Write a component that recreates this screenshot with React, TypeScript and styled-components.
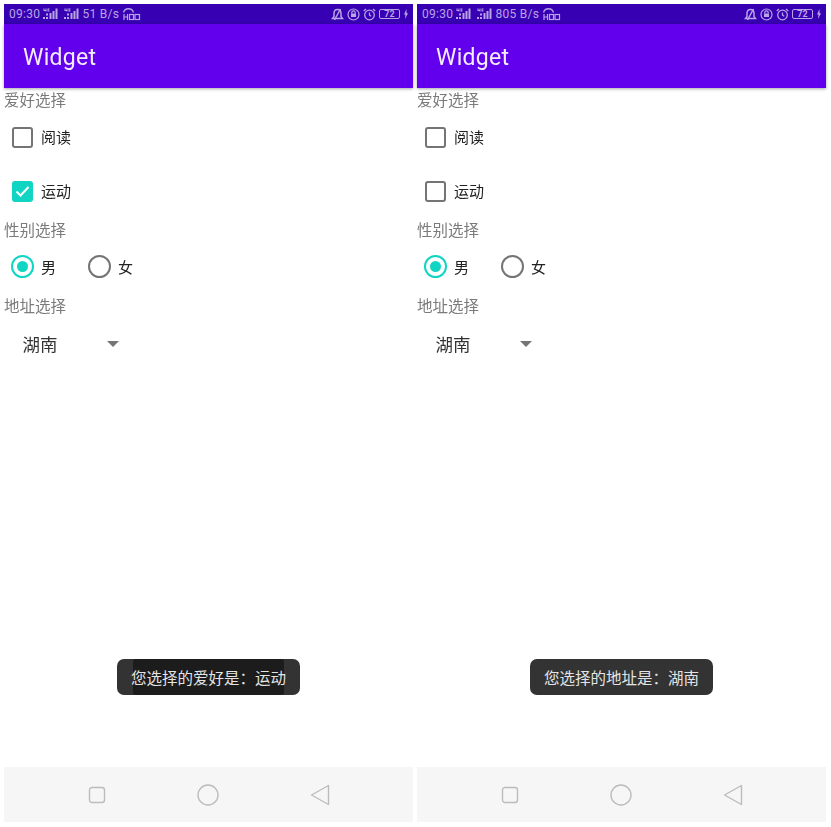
import React from "react";
import styled, { createGlobalStyle } from "styled-components";

const GlobalStyle = createGlobalStyle`
  html, body {
    margin: 0;
    padding: 0;
    background: #fff;
  }
  body {
    font-family: "Roboto", "Noto Sans CJK SC", sans-serif;
  }
`;

const Page = styled.div`
  width: 831px;
  height: 827px;
  box-sizing: border-box;
  padding: 4px 5px 5px 4px;
  display: flex;
  gap: 4px;
  overflow: hidden;
  filter: blur(0.5px);
`;

const Phone = styled.div`
  position: relative;
  width: 409px;
  height: 818px;
  display: flex;
  flex-direction: column;
`;

const StatusBar = styled.div`
  height: 20px;
  flex: none;
  background: #3700b3;
  color: #b9a5e6;
  display: flex;
  align-items: center;
  justify-content: space-between;
  padding: 0 4px 0 5px;
  font-size: 12px;
  letter-spacing: 0.3px;
`;

const StatusGroup = styled.div`
  display: flex;
  align-items: center;
  gap: 3px;
`;

const SignalGroup = styled.div`
  display: flex;
  align-items: center;
  gap: 6px;
`;

const AppBar = styled.div`
  height: 64px;
  flex: none;
  background: #6200ee;
  color: #f3ecfe;
  display: flex;
  align-items: center;
  padding: 2px 19px 0;
  box-sizing: border-box;
  font-size: 23px;
  font-weight: 400;
  letter-spacing: 0.3px;
  box-shadow: 0 1px 3px rgba(0, 0, 0, 0.35);
`;

const Content = styled.div`
  flex: 1;
  display: flex;
  flex-direction: column;
`;

const SectionLabel = styled.div`
  height: 22px;
  line-height: 22px;
  font-size: 15.5px;
  color: #7b7b7b;
  font-family: "Noto Sans CJK SC", sans-serif;
`;

const CheckRow = styled.div`
  height: 54px;
  display: flex;
  align-items: center;
  padding-left: 8px;
  gap: 8px;
  font-size: 15px;
  color: #222;
  font-family: "Noto Sans CJK SC", sans-serif;
`;

const CheckBox = styled.span<{ $checked?: boolean }>`
  width: 21px;
  height: 21px;
  box-sizing: border-box;
  border-radius: 3px;
  border: 2px solid ${(p) => (p.$checked ? "#10d5c3" : "#747474")};
  background: ${(p) => (p.$checked ? "#10d5c3" : "transparent")};
  display: flex;
  align-items: center;
  justify-content: center;
`;

const CheckText = styled.span`
  position: relative;
  top: -1px;
`;

const RadioGroup = styled.div`
  height: 52px;
  margin-bottom: 2px;
  display: flex;
  align-items: center;
  padding-left: 7px;
`;

const RadioItem = styled.div`
  display: flex;
  align-items: center;
  gap: 7px;
  width: 77px;
  font-size: 15px;
  color: #222;
  font-family: "Noto Sans CJK SC", sans-serif;
`;

const RadioCircle = styled.span<{ $checked?: boolean }>`
  width: 23px;
  height: 23px;
  box-sizing: border-box;
  border-radius: 50%;
  border: 2px solid ${(p) => (p.$checked ? "#10d5c3" : "#747474")};
  display: flex;
  align-items: center;
  justify-content: center;
  &::after {
    content: "";
    width: 11px;
    height: 11px;
    border-radius: 50%;
    background: ${(p) => (p.$checked ? "#10d5c3" : "transparent")};
  }
`;

const Spinner = styled.div`
  height: 50px;
  margin-top: 2px;
  display: flex;
  align-items: center;
  padding-left: 18.5px;
  font-size: 17.5px;
  color: #333;
  font-family: "Noto Sans CJK SC", sans-serif;
`;

const SpinnerValue = styled.span`
  width: 84.5px;
`;

const Arrow = styled.span`
  width: 0;
  height: 0;
  margin-top: 1px;
  border-left: 6px solid transparent;
  border-right: 6px solid transparent;
  border-top: 6px solid #757575;
`;

const Toast = styled.div`
  position: absolute;
  left: 113px;
  top: 655px;
  width: 183px;
  height: 36px;
  box-sizing: border-box;
  border-radius: 7px;
  background: #333;
  color: #e4e4e4;
  font-size: 15.5px;
  font-family: "Noto Sans CJK SC", sans-serif;
  display: flex;
  align-items: center;
  justify-content: center;
`;

// the older toast still fading out underneath shows as a darker band
const ToastBand = styled.span<{ $dark?: boolean }>`
  height: 100%;
  display: flex;
  align-items: center;
  justify-content: center;
  width: 151px;
  white-space: nowrap;
  border-radius: 3px;
  background: ${(p) => (p.$dark ? "#1c1c1c" : "transparent")};
`;

const NavBar = styled.div`
  height: 55px;
  flex: none;
  background: #f6f6f6;
  display: flex;
  align-items: center;
  justify-content: space-between;
  padding: 0 83px 0 84px;
`;

const Battery = styled.span`
  width: 21px;
  height: 10px;
  box-sizing: border-box;
  border: 1px solid #b9a5e6;
  border-radius: 2px;
  font-size: 9px;
  font-weight: 700;
  letter-spacing: 0;
  line-height: 8px;
  text-align: center;
`;

const SignalIcon = () => (
  <svg width="15" height="12" viewBox="0 0 15 12" fill="#b9a5e6">
    <rect x="0" y="9" width="2" height="2" />
    <rect x="3" y="9" width="2" height="2" />
    <rect x="3" y="5.5" width="2" height="2" />
    <rect x="6.5" y="5" width="2" height="6" />
    <rect x="9.5" y="3" width="2" height="8" />
    <rect x="12.5" y="0.5" width="2" height="10.5" />
    <path d="M0.5 0.5h1v1.5h1V0.5h1v3h-1V3h-2zM4.5 0.5h2v1h-1v1h1v1h-2z" />
  </svg>
);

const HdIcon = () => (
  <svg width="19" height="14" viewBox="0 0 19 14" fill="none" stroke="#b9a5e6">
    <path d="M1.5 5.5C3 0.5 10 0.5 11.5 5.5" strokeWidth="1.4" />
    <path d="M2 7v6M5.5 7v6M2 10h3.5" strokeWidth="1.2" />
    <rect x="7.5" y="7.5" width="4" height="5" strokeWidth="1.2" />
    <rect x="13" y="7.5" width="4.5" height="5" strokeWidth="1.2" />
  </svg>
);

const BellOffIcon = () => (
  <svg width="13" height="13" viewBox="0 0 13 13" fill="none" stroke="#b9a5e6" strokeWidth="1.5">
    <path d="M1.5 10.5h10L10 8.5V5.5C10 3 8.5 1.5 6.5 1.5S3 3 3 5.5v3z" />
    <path d="M3.5 12L9.5 1" />
  </svg>
);

const LockRingIcon = () => (
  <svg width="13" height="13" viewBox="0 0 13 13" fill="none" stroke="#b9a5e6" strokeWidth="1.2">
    <circle cx="6.5" cy="6.5" r="5.5" />
    <rect x="4" y="5.5" width="5" height="3.5" fill="#b9a5e6" stroke="none" />
    <path d="M4.8 5.5V4.6a1.7 1.7 0 0 1 3.4 0v.9" />
  </svg>
);

const AlarmIcon = () => (
  <svg width="13" height="13" viewBox="0 0 13 13" fill="none" stroke="#b9a5e6" strokeWidth="1.3">
    <circle cx="6.5" cy="7" r="4.8" />
    <path d="M6.5 4.5V7.2L8.3 8.2M0.8 3L3 1M12.2 3L10 1" />
  </svg>
);

const ChargeIcon = () => (
  <svg width="6" height="10" viewBox="0 0 6 10" fill="#b9a5e6">
    <path d="M3.5 0L1 5.5h1.5L2 10l3-5.8H3.5z" />
  </svg>
);

const CheckIcon = () => (
  <svg width="15" height="13" viewBox="0 0 15 13" fill="none" stroke="#fff" strokeWidth="2">
    <path d="M1.5 6.5L5.5 10.5L13.5 2" />
  </svg>
);

const NavSquare = () => (
  <svg width="18" height="18" viewBox="0 0 18 18" fill="none" stroke="#bcbcbc" strokeWidth="1.4">
    <rect x="1.5" y="1.5" width="15" height="15" rx="2.5" />
  </svg>
);

const NavCircle = () => (
  <svg width="22" height="22" viewBox="0 0 22 22" fill="none" stroke="#bcbcbc" strokeWidth="1.4">
    <circle cx="11" cy="11" r="10" />
  </svg>
);

const NavBack = () => (
  <svg width="20" height="22" viewBox="0 0 20 22" fill="none" stroke="#bcbcbc" strokeWidth="1.4" strokeLinejoin="round">
    <path d="M18.5 1.5V20.5L1.5 11z" />
  </svg>
);

type ScreenProps = {
  speed: string;
  sportChecked: boolean;
  toast: string;
  toastOverlap?: boolean;
};

function Screen({ speed, sportChecked, toast, toastOverlap }: ScreenProps) {
  return (
    <Phone>
      <StatusBar>
        <StatusGroup>
          <span>09:30</span>
          <SignalGroup>
            <SignalIcon />
            <SignalIcon />
          </SignalGroup>
          <span>{speed}</span>
          <HdIcon />
        </StatusGroup>
        <StatusGroup>
          <BellOffIcon />
          <LockRingIcon />
          <AlarmIcon />
          <Battery>72</Battery>
          <ChargeIcon />
        </StatusGroup>
      </StatusBar>
      <AppBar>Widget</AppBar>
      <Content>
        <SectionLabel>爱好选择</SectionLabel>
        <CheckRow>
          <CheckBox />
          <CheckText>阅读</CheckText>
        </CheckRow>
        <CheckRow>
          <CheckBox $checked={sportChecked}>{sportChecked && <CheckIcon />}</CheckBox>
          <CheckText>运动</CheckText>
        </CheckRow>
        <SectionLabel>性别选择</SectionLabel>
        <RadioGroup>
          <RadioItem>
            <RadioCircle $checked />男
          </RadioItem>
          <RadioItem>
            <RadioCircle />女
          </RadioItem>
        </RadioGroup>
        <SectionLabel>地址选择</SectionLabel>
        <Spinner>
          <SpinnerValue>湖南</SpinnerValue>
          <Arrow />
        </Spinner>
      </Content>
      <Toast>
        <ToastBand $dark={toastOverlap}>{toast}</ToastBand>
      </Toast>
      <NavBar>
        <NavSquare />
        <NavCircle />
        <NavBack />
      </NavBar>
    </Phone>
  );
}

export default function App() {
  return (
    <Page>
      <GlobalStyle />
      <Screen speed="51 B/s" sportChecked toast="您选择的爱好是：运动" toastOverlap />
      <Screen speed="805 B/s" sportChecked={false} toast="您选择的地址是：湖南" />
    </Page>
  );
}
